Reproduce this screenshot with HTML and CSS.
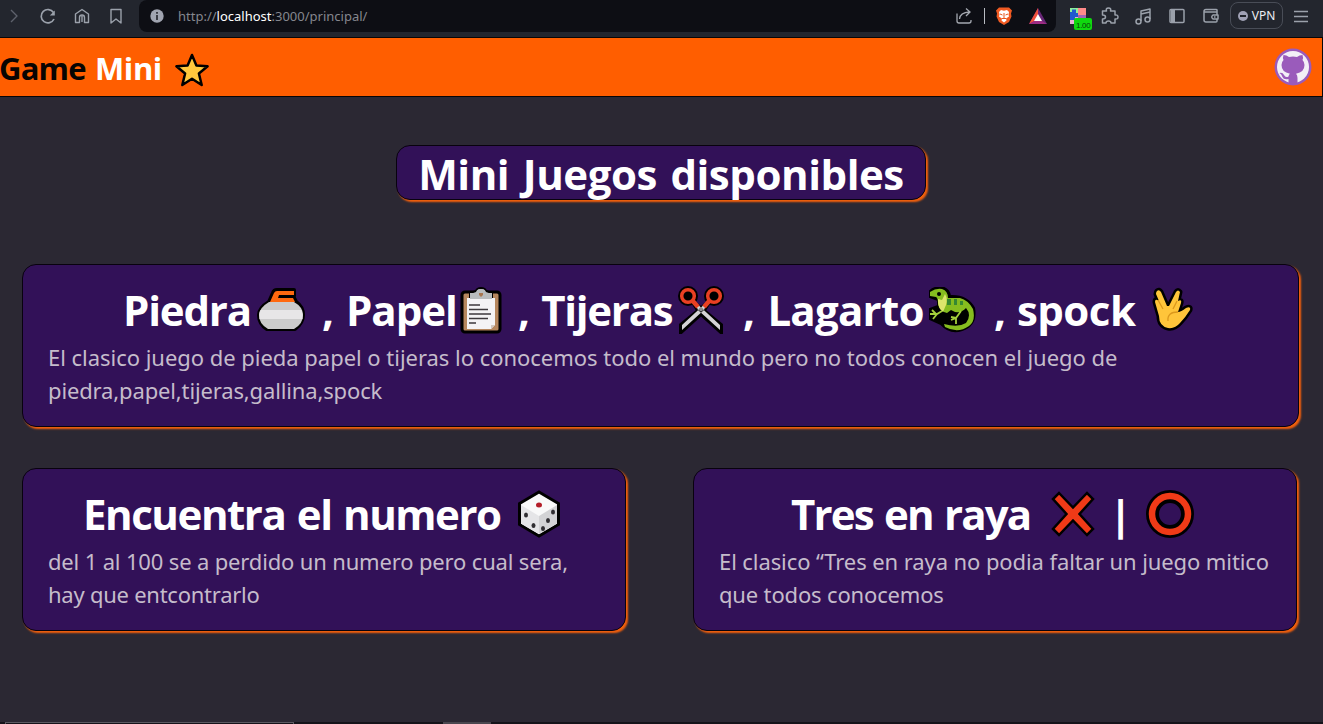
FILE: index.html
```
<!DOCTYPE html>
<html lang="es">
<head>
<meta charset="utf-8">
<title>Game Mini</title>
<link rel="stylesheet" href="styles.css">
</head>
<body>
<div class="browser">
  <svg class="nav" width="139" height="37" viewBox="0 0 139 37" fill="none" stroke="#9ba1ab" stroke-width="1.4" stroke-linejoin="round">
    <path d="M11 10l6 6-6 6" stroke="#5e626c"/>
    <path d="M53.500 12.500a6.700 6.700 0 1 0 .5 6.500" stroke-width="1.700"/><path d="M54.800 10.500v5h-5z" fill="#9ba1ab" stroke="none"/>
    <path d="M75.500 14l6.500-4.500 6.500 4.500V22.500h-4v-5a2.500 2.500 0 0 0-5 0v5h-4zM82 16v6"/>
    <path d="M111 9.500h10v13.500l-5-4-5 4z"/>
  </svg>
  <div class="address">
    <svg width="14" height="14" viewBox="0 0 14 14"><circle cx="7" cy="7" r="6.700" fill="#a0a4b0"/><path d="M7 6v5M7 3v1.800" stroke="#17191f" stroke-width="1.500" fill="none"/></svg>
    <span class="url">http://<b>localhost</b>:3000/principal/</span>
    <svg class="share" width="108" height="32" viewBox="0 0 108 32" fill="none">
      <path d="M9 13.500V21q0 2 2 2h10q2 0 2-2v-1M11.500 19q.5-6.500 10-7M18 8.500l4 3.500-4 4" stroke="#a4a8b0" stroke-width="1.300"/>
      <path d="M36.500 8v16" stroke="#b8bcc2"/>
      <path d="M51 7.500h10l3 3-1 3 .5 3-2.500 5.500-5 3-5-3-2.500-5.500.5-3-1-3z" fill="#f05a22"/>
      <path d="M51 12l2-2 3 .7 3-.7 2 2-.5 2.500.5 2-3 2 .5 2-2.500 2-2.500-2 .5-2-3-2 .5-2z" fill="#fff"/>
      <path d="M52 14l2.500 1M60 14l-2.500 1M56 13v5M54 18.500h4" stroke="#e6551d" stroke-width="1"/>
      <path d="M90 8L81 24h18z" fill="#672575"/><path d="M90 8l-9 16 9-5z" fill="#f0503b"/><path d="M81 24h18l-9-5z" fill="#9c2b83"/><path d="M90 14l-4 7h8z" fill="#fff"/>
    </svg>
  </div>
  <svg class="tools" width="165" height="37" viewBox="0 0 165 37" fill="none" stroke="#9ba1ab" stroke-width="1.500" stroke-linejoin="round">
    <g stroke="none"><path d="M14 8h8v8h-8z" fill="#8df09b"/><path d="M22 8h8v8h-8z" fill="#ff8a8a"/><path d="M14 16h8v8h-8z" fill="#e6b1d5"/><path d="M22 15h8v8h-8z" fill="#a065b5"/><path d="M14 12h2V9.500h4V13h2v4h-3v3h-5z" fill="#2159cf"/>
    <rect x="18" y="18" width="18" height="12" rx="2" fill="#10d80f"/></g>
    <text class="badge" x="20" y="28" stroke="none">1.00</text>
    <path d="M46.500 11h4q-1-3 2-3t2 3h4.500v4q3-.5 3 2t-3 2v4h-4q0-2-2.500-2t-2.500 2h-3.500v-4q3 0 3-2t-3-2z"/>
    <path d="M85 21v-10l9-2v10M85 14l9-2"/><circle cx="82.500" cy="21.500" r="2.500"/><circle cx="91.500" cy="19.500" r="2.500"/>
    <rect x="114" y="9.500" width="14" height="13" rx="1"/><path d="M115 10h4v12h-4z" fill="#9ba1ab" stroke="none"/>
    <path d="M161 12V10q0-.5-1-.5h-10q-2 0-2 2V20q0 2 2 2h10q1 0 1-1v-2M148 12h13v3M162 15h-5q-2.500 2 0 4h5zM158 17h1.500"/>
  </svg>
  <div class="vpn"><i></i>VPN</div>
  <svg width="14" height="32" class="menu" viewBox="0 0 14 32" stroke="#9ba1ab" stroke-width="1.300"><path d="M0 11.500h14M0 16.500h14M0 21.500h14"/></svg>
</div>

<header class="topbar">
  <div class="brand"><span class="dark">Game</span><span class="light">Mini</span>
    <svg width="36" height="36" viewBox="0 0 36 36"><path d="M18 3l4.400 10.500 11.200.8-8.700 7.200 2.800 11.500L18 26.700 8.300 33l2.800-11.500-8.700-7.200 11.200-.8z" fill="#ffc83d" stroke="#000" stroke-width="2.500" stroke-linejoin="round"/></svg>
  </div>
  <svg class="github" width="38" height="38" viewBox="0 0 38 38"><circle cx="19" cy="19" r="18.500" fill="#9a5bbb"/><circle cx="19" cy="19" r="16" fill="#f3f0f7"/><path d="M14.500 37v-6q-5 1-6-2t-3-4q3-1 4.500 2t4.500 1.500q.3-2 1.500-2.800-8.500-1.500-8.500-8.700 0-3 2-5-1-2.500 0-5 3 0 5.500 2 4-1 8 0 2.500-2 5.500-2 1 2.500 0 5 2 2 2 5 0 7.200-8.500 8.700 1.500 1.500 1.500 4.300v7z" fill="#9a5bbb"/></svg>
</header>

<main class="page">
  <h1 class="title"><span>Mini Juegos disponibles</span></h1>
  <section class="cards">
    <article class="card wide">
      <h2 class="heading">
        <span class="t-piedra">Piedra</span>
        <svg class="i-stone" width="48" height="44" viewBox="0 0 48 44"><path d="M12 14L16 5Q17 2 20 2h17v6H22v2h15l2 4q7 5 7 13 0 8-8 14H10Q2 36 2 27q0-7 10-13z" stroke="#000" stroke-width="4" stroke-linejoin="round"/><path d="M13 14l4-9q1-2 3-2h17v4H22l-1 3h15l2 4z" fill="#ff690f"/><path d="M12 14h25q9 5 9 13 0 9-9 14H11q-9-5-9-14 0-7 10-13z" fill="#cbcbcb"/><path d="M3.500 22h41q2 4 1 9h-43q-1-5 1-9z" fill="#e7e6e7"/></svg>
        <span class="t-papel">, Papel</span>
        <svg class="i-paper" width="42" height="48" viewBox="0 0 42 48"><rect x="2" y="6" width="38" height="40" rx="3" fill="#b6875e" stroke="#000" stroke-width="3"/><path d="M16 5q1-3 5-3t5 3l6 2v6H10V7z" fill="#bcc0c0" stroke="#000" stroke-width="2"/><path d="M7 12h28v27l-4 4H7z" fill="#f4f3f5"/><path d="M10 7h6q0-4 5-4t5 4h6v6H10z" fill="#b8bcbd"/><path d="M19 7h4v2l-2 2-2-2z" fill="#a6764f"/><path d="M9 19h11M9 23.500h19M9 28h22M9 32.500h19M9 37h7" stroke="#3d393d" stroke-width="1.600"/><path d="M35 39h-4v4z" fill="#d2c7c0"/></svg>
        <span class="t-tijeras">, Tijeras</span>
        <svg class="i-scissors" width="46" height="48" viewBox="0 0 46 48"><path d="M14 15L43 39v7L22 27zM32 15L3 39v7l21-19z" stroke="#000" stroke-width="4"/><circle cx="10" cy="10" r="10"/><circle cx="36" cy="10" r="10"/><path d="M16 15L42 39v5L20 24zM30 15L4 39v5l22-20z" fill="#d4d3d5"/><g fill="#000" stroke="#e94023" stroke-width="3.500"><circle cx="10" cy="10" r="6.300"/><circle cx="36" cy="10" r="6.300"/></g><path d="M14 14l6 7M32 14l-6 7" stroke="#e94023" stroke-width="4.500"/><circle cx="23" cy="23.500" r="2" fill="#8c8d90"/></svg>
        <span class="t-lagarto">, Lagarto</span>
        <svg class="i-lizard" width="48" height="46" viewBox="0 0 48 46"><path d="M2 4q5-5 14-3 5 2 6 8 17-1 24 12 3 17-12 22-12 4-21-6L2 32V22l8-3V13l-8-3z" stroke="#000" stroke-width="2"/><path d="M2 5q6-4 12-3 6 2 6 9h12q8 2 13 11 3 12-4 17-11 8-24 1l-1-3q14 4 22-1 6-8 0-15-4 5-11 4l-4-2-4 3q-8-2-9-10 0-5-2-6l-6-1z" fill="#86bd1f"/><path d="M10 12l4 1 3-6q3 5 1 11l-3 7q-5-4-5-10z" fill="#dce66c"/><path d="M19 12h4v6h-4zM26 12h3v6h-3zM32 14h3v4h-3z" fill="#368832"/><circle cx="11" cy="7" r="2"/><path d="M14 24l-5 3H2m7 0l-4 5m3-5l-4-4M33 24l-5 7-5 2m5-2v6m0-6l-5-1" stroke="#a3cf3b" stroke-width="1.800" fill="none"/></svg>
        <span class="t-spock">, spock</span>
        <svg class="i-hand" width="42" height="46" viewBox="0 0 42 46"><path d="M5 4q2-2 4 1l6 14h2l7-14q2-3 4 0l-2 9q4-2 3 2l-3 9q3 0 8-4 5-2 4 2-5 8-10 13-5 6-12 5-9-2-9-12L3 15q0-4 4-1L4 7q0-2 1-3z" fill="#ffc53a" stroke="#000" stroke-width="5" paint-order="stroke" stroke-linejoin="round"/><path d="M6 13l5 9M25 14l-4 8M16 34q-1-9 10-9" stroke="#dc981c" stroke-width="1.300" fill="none"/></svg>
      </h2>
      <p class="copy"><span class="l1">El clasico juego de pieda papel o tijeras lo conocemos todo el mundo pero no todos conocen el juego de</span><br><span class="l2">piedra,papel,tijeras,gallina,spock</span></p>
    </article>
    <article class="card">
      <h2 class="heading">
        <span class="t-num">Encuentra el numero</span>
        <svg class="i-die" width="44" height="48" viewBox="0 0 44 48"><path d="M22 2l19.500 11.500v21L22 46 2.500 34.500v-21z" fill="#f9f9f9" stroke="#000" stroke-width="3"/><path d="M4 15l18 11v18L4 33.500z" fill="#e5e5e7"/><path d="M40 15L22 26v18l18-10.500z" fill="#d3d3d5"/><ellipse cx="22" cy="15" rx="3" ry="2.500" fill="#b41e28"/><g fill="#302e32"><ellipse cx="9" cy="25" rx="2" ry="2.600"/><ellipse cx="16.500" cy="35.500" rx="2" ry="2.600"/><ellipse cx="36" cy="22" rx="2" ry="2.600"/><ellipse cx="31" cy="30.500" rx="2" ry="2.600"/><ellipse cx="26" cy="38.500" rx="2" ry="2.600"/></g></svg>
      </h2>
      <p class="copy"><span class="l3">del 1 al 100 se a perdido un numero pero cual sera,</span><br><span class="l4">hay que entcontrarlo</span></p>
    </article>
    <article class="card">
      <h2 class="heading">
        <span class="t-tres">Tres en raya</span>
        <svg class="i-cross" width="44" height="46" viewBox="0 0 44 46"><path d="M8 2l14 14.500L36 2l6 6-13.500 15L42 38l-6 6-14-14.500L8 44l-6-6 13.500-15L2 8z" fill="#f03a17" stroke="#000" stroke-width="2.500"/></svg>
        <span class="bar">|</span>
        <svg class="i-ring" width="48" height="48" viewBox="0 0 48 48"><circle cx="24" cy="24" r="17.500" fill="none" stroke="#000" stroke-width="13"/><circle cx="24" cy="24" r="18" fill="none" stroke="#f03a17" stroke-width="6.500"/></svg>
      </h2>
      <p class="copy"><span class="l5">El clasico “Tres en raya no podia faltar un juego mitico</span><br><span class="l6">que todos conocemos</span></p>
    </article>
  </section>
</main>
<footer class="edge"><i class="task"></i><i class="tab"></i></footer>
</body>
</html>
```
FILE: styles.css
```
* { box-sizing: border-box; }
body { margin: 0; width: 1323px; height: 724px; overflow: hidden; display: flex; flex-direction: column; background: #2b2833; font-family: "Open Sans", "Noto Sans", sans-serif; }
svg { display: block; flex: none; }
.browser { height: 37px; flex: none; display: flex; align-items: flex-start; background: #23262e; }
.address { width: 917px; height: 32px; display: flex; align-items: center; padding: 0 0 0 11px; background: #0d0e14; border-radius: 8px 0 8px 8px; }
.url { margin-left: 14px; font: 13px "Noto Sans", sans-serif; color: #85878e; white-space: nowrap; }
.url b { font-weight: 400; color: #fff; }
.share { margin-left: auto; }
.badge { font: 8px "Liberation Sans", sans-serif; fill: #093d09; letter-spacing: -0.3px; }
.vpn { width: 53px; height: 27px; margin: 2px 0 0 9px; border: 1px solid #494d57; border-radius: 8px; display: flex; align-items: center; justify-content: center; gap: 4px; color: #edeef3; font: 12px "Noto Sans", sans-serif; }
.vpn i { width: 10px; height: 10px; border-radius: 50%; background: linear-gradient(#20232b, #20232b) center / 6px 2px no-repeat #a0a1b5; }
.menu { margin-left: 11px; }
.topbar { height: 60px; flex: none; display: flex; justify-content: space-between; background: #ff5e00; border: solid #080606; border-width: 1px 1px 1px 0; }
.brand { display: flex; font-size: 31px; font-weight: 700; line-height: 42px; padding-top: 9px; }
.brand svg { margin-top: 5px; margin-left: 12px; }
.dark { width: 96px; color: #080402; margin-left: -1px; letter-spacing: -0.8px; }
.light { width: 67px; color: #fff; letter-spacing: -0.4px; }
.github { margin: 10px 10px 0 0; }
.page { flex: 1; display: flex; flex-direction: column; align-items: center; padding-top: 48px; }
.title { width: 530px; height: 55px; margin: 0 1px 0 0; display: flex; justify-content: center; font-size: 42px; line-height: 55px; white-space: nowrap; color: #fff; letter-spacing: -0.45px; word-spacing: 3px; }
.title, .card { background: #321158; border: 1px solid #08020e; border-radius: 14px; box-shadow: 2px 2px 2px #f5600c; }
.cards { width: 1323px; margin-top: 64px; padding: 0 24px 0 22px; display: grid; grid-template-columns: 604px 604px; column-gap: 67px; row-gap: 41px; }
.card { height: 163px; padding: 16px 20px 0 25px; }
.wide { grid-column: 1 / 3; width: 1277px; }
.heading { height: 58px; margin: 0; display: flex; align-items: center; color: #fff; font-size: 42px; line-height: 56px; white-space: nowrap; padding-bottom: 1px; }
.copy { margin: 2px 0 0; color: #c5bccb; font: 22px/33px "Noto Sans", sans-serif; white-space: nowrap; }
.l1 { letter-spacing: -0.03px; }
.l2 { letter-spacing: -0.14px; }
.l3 { letter-spacing: -0.16px; }
.l4 { letter-spacing: -0.25px; }
.l5 { letter-spacing: -0.09px; }
.l6 { letter-spacing: -0.16px; }
.t-piedra { margin-left: 75px; width: 134px; letter-spacing: -1.2px; }
.t-papel { margin-left: 17px; width: 138px; letter-spacing: -1px; word-spacing: 3px; }
.t-tijeras { margin-left: 16px; width: 160px; letter-spacing: -1.3px; word-spacing: 3px; }
.t-lagarto { margin-left: 19px; width: 185px; letter-spacing: -0.75px; word-spacing: 3px; }
.t-spock { margin-left: 18px; width: 158px; letter-spacing: -0.5px; word-spacing: 1px; }
.t-num { margin-left: 35px; width: 434px; letter-spacing: -1.45px; word-spacing: 2px; }
.t-tres { margin-left: 72px; width: 260px; letter-spacing: -1.8px; word-spacing: 2px; }
.bar { margin-left: 14px; width: 37px; }
.edge { height: 2px; flex: none; display: flex; background: #15131a; }
.task { width: 289px; margin-left: 5px; border: 1px solid #5b5961; border-bottom: 0; }
.tab { width: 48px; margin-left: 149px; background: #4a474f; }
```
